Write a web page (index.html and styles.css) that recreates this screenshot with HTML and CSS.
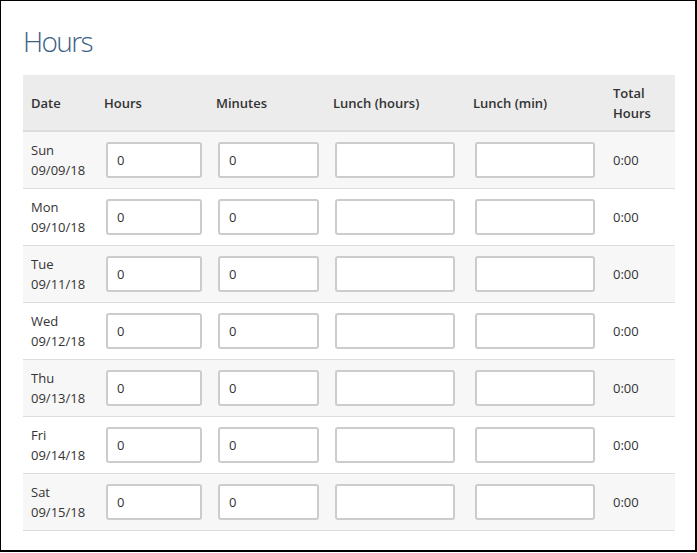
FILE: index.html
```html
<!DOCTYPE html>
<html>
<head>
<meta charset="utf-8">
<link rel="stylesheet" href="styles.css">
</head>
<body>
<div class="frame">
  <h1 class="title">Hours</h1>
  <table class="hours">
    <colgroup>
      <col class="c-date"><col class="c-hours"><col class="c-min"><col class="c-lh"><col class="c-lm"><col class="c-total">
    </colgroup>
    <thead>
      <tr><th>Date</th><th>Hours</th><th>Minutes</th><th>Lunch (hours)</th><th>Lunch (min)</th><th>Total Hours</th></tr>
    </thead>
    <tbody>
      <tr><td class="date">Sun<br>09/09/18</td><td class="in"><input class="i-h" value="0"></td><td class="in"><input class="i-m" value="0"></td><td class="in"><input class="i-l"></td><td class="in"><input class="i-l"></td><td class="total">0:00</td></tr>
      <tr><td class="date">Mon<br>09/10/18</td><td class="in"><input class="i-h" value="0"></td><td class="in"><input class="i-m" value="0"></td><td class="in"><input class="i-l"></td><td class="in"><input class="i-l"></td><td class="total">0:00</td></tr>
      <tr><td class="date">Tue<br>09/11/18</td><td class="in"><input class="i-h" value="0"></td><td class="in"><input class="i-m" value="0"></td><td class="in"><input class="i-l"></td><td class="in"><input class="i-l"></td><td class="total">0:00</td></tr>
      <tr><td class="date">Wed<br>09/12/18</td><td class="in"><input class="i-h" value="0"></td><td class="in"><input class="i-m" value="0"></td><td class="in"><input class="i-l"></td><td class="in"><input class="i-l"></td><td class="total">0:00</td></tr>
      <tr><td class="date">Thu<br>09/13/18</td><td class="in"><input class="i-h" value="0"></td><td class="in"><input class="i-m" value="0"></td><td class="in"><input class="i-l"></td><td class="in"><input class="i-l"></td><td class="total">0:00</td></tr>
      <tr><td class="date">Fri<br>09/14/18</td><td class="in"><input class="i-h" value="0"></td><td class="in"><input class="i-m" value="0"></td><td class="in"><input class="i-l"></td><td class="in"><input class="i-l"></td><td class="total">0:00</td></tr>
      <tr><td class="date">Sat<br>09/15/18</td><td class="in"><input class="i-h" value="0"></td><td class="in"><input class="i-m" value="0"></td><td class="in"><input class="i-l"></td><td class="in"><input class="i-l"></td><td class="total">0:00</td></tr>
    </tbody>
  </table>
</div>
</body>
</html>
```
FILE: styles.css
```css
html, body {
  margin: 0;
  padding: 0;
  background: #fff;
}
body {
  font-family: "Open Sans", "Liberation Sans", sans-serif;
  font-size: 13px;
  color: #333;
}
.frame {
  box-sizing: border-box;
  width: 697px;
  height: 552px;
  border: 1px solid #000;
  border-right-width: 2px;
  border-bottom-width: 2px;
  padding: 24px 20px 0 22px;
}
.title {
  margin: 0 0 18px 0;
  font-size: 28px;
  font-weight: 300;
  line-height: 32px;
  letter-spacing: -1.6px;
  color: #3d5f86;
}
.hours {
  width: 652px;
  table-layout: fixed;
  border-collapse: collapse;
  border-spacing: 0;
}
.c-date { width: 73px; }
.c-hours { width: 112px; }
.c-min { width: 117px; }
.c-lh { width: 140px; }
.c-lm { width: 140px; }
.c-total { width: 70px; }
.hours th {
  background: #ececec;
  text-align: left;
  font-weight: 600;
  line-height: 20px;
  padding: 8px 8px 7px 8px;
  vertical-align: middle;
  border-bottom: 2px solid #dddddd;
}
.hours td {
  padding: 8px;
  line-height: 20px;
  vertical-align: middle;
  border-bottom: 1px solid #dddddd;
}
.hours tbody tr:nth-child(odd) td {
  background: #f7f7f7;
}
.hours td.in {
  padding-left: 10px;
  padding-right: 0;
}
.hours input {
  box-sizing: border-box;
  display: block;
  height: 36px;
  margin: 0;
  border: 2px solid #cccccc;
  border-radius: 3px;
  background: #fff;
  padding: 0 0 0 9px;
  font-family: "Open Sans", "Liberation Sans", sans-serif;
  font-size: 13px;
  color: #333;
  outline: none;
}
.i-h { width: 96px; }
.i-m { width: 101px; }
.i-l { width: 120px; }
```
